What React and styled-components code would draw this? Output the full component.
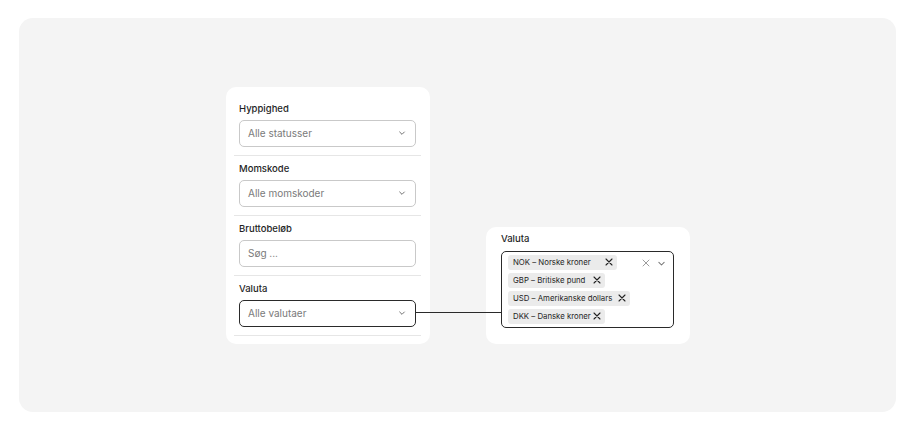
import React from 'react';
import styled, { createGlobalStyle } from 'styled-components';

const TEXT_COLOR = '#1f1f1f';
const MUTED = '#7a7a7a';
const BORDER = '#c9c9c9';
const DIVIDER = '#e6e6e6';
const DARK = '#2a2a2a';

const filters = [
  { label: 'Hyppighed', placeholder: 'Alle statusser', select: true },
  { label: 'Momskode', placeholder: 'Alle momskoder', select: true },
  { label: 'Bruttobeløb', placeholder: 'Søg ...', select: false },
  { label: 'Valuta', placeholder: 'Alle valutaer', select: true, active: true },
];

// gap = space between the name and its remove cross, as drawn
const currencies = [
  { name: 'NOK – Norske kroner', gap: 14 },
  { name: 'GBP – Britiske pund', gap: 8 },
  { name: 'USD – Amerikanske dollars', gap: 6 },
  { name: 'DKK – Danske kroner', gap: 2 },
];

const Chevron = ({ size = 8, color = '#666' }) => (
  <svg width={size} height={size} viewBox="0 0 12 12" fill="none">
    <path d="M2.5 4.5L6 8l3.5-3.5" stroke={color} strokeWidth="1.4" strokeLinecap="round" strokeLinejoin="round" />
  </svg>
);

const Cross = ({ size = 9, color = '#222', weight = 1.4 }) => (
  <svg width={size} height={size} viewBox="0 0 12 12" fill="none">
    <path d="M1.5 1.5l9 9M10.5 1.5l-9 9" stroke={color} strokeWidth={weight} strokeLinecap="round" />
  </svg>
);

export default function App() {
  return (
    <>
      <GlobalStyle />
      <Canvas>
        <Group>
          <FilterCard>
            {filters.map((f) => (
              <Section key={f.label}>
                <Label>{f.label}</Label>
                <Input $active={f.active}>
                  <Placeholder>{f.placeholder}</Placeholder>
                  {f.select && <Chevron />}
                </Input>
              </Section>
            ))}
          </FilterCard>
          <Connector />
          <DetailCard>
            <Label>Valuta</Label>
            <MultiBox>
              <Chips>
                {currencies.map((c) => (
                  <Chip key={c.name} $gap={c.gap}>
                    <span>{c.name}</span>
                    <Cross size={8} weight={1.6} />
                  </Chip>
                ))}
              </Chips>
              <Controls>
                <Cross size={8} color="#777" weight={1.1} />
                <Chevron size={9} color="#777" />
              </Controls>
            </MultiBox>
          </DetailCard>
        </Group>
      </Canvas>
    </>
  );
}

const GlobalStyle = createGlobalStyle`
  html, body {
    margin: 0;
    padding: 0;
    background: #ffffff;
    font-family: Inter, "Liberation Sans", sans-serif;
  }
`;

const Canvas = styled.div`
  margin: 18px 19px 19px 19px;
  height: 394px;
  background: #f4f4f4;
  border-radius: 14px;
  display: flex;
  align-items: center;
  justify-content: center;
`;

const Group = styled.div`
  position: relative;
  display: flex;
  align-items: flex-end;
  gap: 56px;
  margin-left: 1px;
`;

const FilterCard = styled.div`
  width: 204px;
  box-sizing: border-box;
  padding: 9px 9px 8px 8px;
  background: #ffffff;
  border-radius: 10px;
  display: flex;
  flex-direction: column;
`;

const Section = styled.div`
  padding: 6px 5px 8px 5px;
  border-bottom: 1px solid ${DIVIDER};
  display: flex;
  flex-direction: column;
  gap: 4px;
`;

const Label = styled.div`
  font-size: 9.5px;
  line-height: 14px;
  font-weight: 500;
  color: ${TEXT_COLOR};
`;

const Input = styled.div`
  height: 27px;
  box-sizing: border-box;
  border: ${(p) => (p.$active ? `1.5px solid ${DARK}` : `1px solid ${BORDER}`)};
  border-radius: 5px;
  padding: 0 9px 0 8px;
  display: flex;
  align-items: center;
  justify-content: space-between;
  background: #ffffff;
`;

const Placeholder = styled.span`
  font-size: 10px;
  color: ${MUTED};
`;

const Connector = styled.div`
  position: absolute;
  left: 189px;
  width: 86px;
  bottom: 31px;
  height: 1px;
  background: ${DARK};
`;

const DetailCard = styled.div`
  width: 204px;
  box-sizing: border-box;
  padding: 5px 16px 16px 15px;
  background: #ffffff;
  border-radius: 10px;
  display: flex;
  flex-direction: column;
  gap: 5px;
`;

const MultiBox = styled.div`
  height: 77px;
  box-sizing: border-box;
  border: 1.5px solid ${DARK};
  border-radius: 5px;
  padding: 3px 7px 0 6px;
  display: flex;
  justify-content: space-between;
  align-items: flex-start;
`;

const Chips = styled.div`
  display: flex;
  flex-direction: column;
  align-items: flex-start;
  gap: 3px;
`;

const Chip = styled.div`
  height: 15px;
  box-sizing: border-box;
  padding: 0 4px 0 5px;
  background: #ebebeb;
  border-radius: 3px;
  display: flex;
  align-items: center;
  gap: ${(p) => p.$gap}px;
  font-size: 7.8px;
  color: ${TEXT_COLOR};
`;

const Controls = styled.div`
  display: flex;
  align-items: center;
  gap: 7px;
  padding-top: 4px;
`;
